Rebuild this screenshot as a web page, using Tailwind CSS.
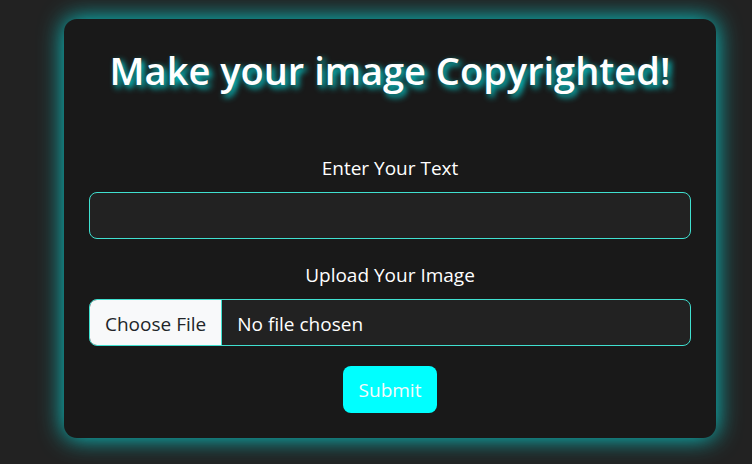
<!DOCTYPE html>
<html lang="en">
<head>
<meta charset="utf-8">
<meta name="viewport" content="width=device-width, initial-scale=1">
<title>Make your image Copyrighted!</title>
<script src="https://cdn.jsdelivr.net/npm/@tailwindcss/browser@4"></script>
</head>
<body class="min-h-screen bg-[#222222] pt-[19px] pr-9 pb-6 pl-16 font-['Open_Sans','Noto_Sans',sans-serif] text-[19px] leading-[30px] text-white">
<main class="rounded-[13px] bg-[#191919] px-[25px] pt-[27px] pb-[25px] text-center shadow-[0_0_25px_#00ffffcc]">
  <h1 class="mb-[59px] text-[38px] leading-[48px] font-semibold whitespace-nowrap [text-shadow:3px_3px_6px_#00ffffdd]">Make your image Copyrighted!</h1>
  <form>
    <div class="mb-[21px]">
      <label for="text" class="mb-[9px] block">Enter Your Text</label>
      <input id="text" type="text" class="block h-[47px] w-full rounded-[8px] border border-[#40e0d0] bg-[#222222] px-[15px]">
    </div>
    <div class="mb-5">
      <label for="image" class="mb-[9px] block">Upload Your Image</label>
      <input id="image" type="file" class="block h-[47px] w-full overflow-hidden rounded-[8px] border border-[#40e0d0] bg-[#222222] leading-[45px] file:mr-[15px] file:h-[45px] file:border-0 file:border-r file:border-solid file:border-[#40e0d0] file:bg-[#f8f9fa] file:px-[15px] file:pt-[2px] file:text-[#212529]">
    </div>
    <button type="submit" class="h-[47px] rounded-[8px] bg-[#00ffff] px-4 text-[#f8f9fa]">Submit</button>
  </form>
</main>
</body>
</html>
